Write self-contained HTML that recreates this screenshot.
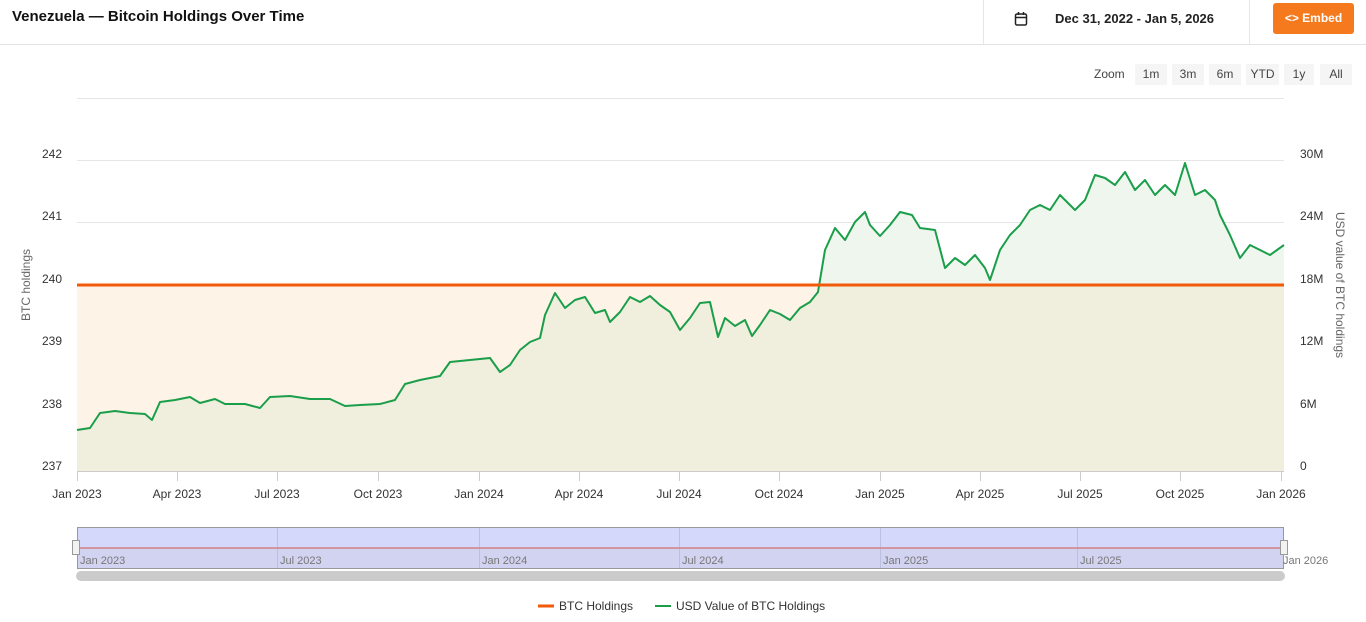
<!DOCTYPE html>
<html><head><meta charset="utf-8"><style>
body{margin:0;width:1366px;height:622px;background:#fff;font-family:"Liberation Sans",sans-serif;overflow:hidden;position:relative}
.hdr{position:absolute;left:0;top:0;width:1366px;height:44px;border-bottom:1px solid #e3e3e3}
.title{position:absolute;left:12px;top:8px;font-size:15px;font-weight:bold;color:#111}
.date{position:absolute;left:983px;top:0;width:265px;height:44px;border-left:1px solid #e6e6e6;border-right:1px solid #e6e6e6}
.date span{position:absolute;left:71px;top:11px;font-size:13px;font-weight:bold;color:#222}
.embed{position:absolute;left:1273px;top:3px;width:81px;height:31px;background:#f57a1e;border-radius:3px;color:#fff;font-size:12px;font-weight:bold;line-height:31px;text-align:center}
.zoom{position:absolute;top:64px;font-size:12px;color:#444;height:21px;line-height:21px;text-align:center;background:#f5f5f5}
</style></head><body>
<div class="hdr"><div class="title">Venezuela — Bitcoin Holdings Over Time</div>
<div class="date"><svg style="position:absolute;left:30px;top:11px" width="14" height="16" viewBox="0 0 14 16"><rect x="1.5" y="3" width="11" height="11" rx="1.5" fill="none" stroke="#222" stroke-width="1.5"/><line x1="1.5" y1="6.5" x2="12.5" y2="6.5" stroke="#222" stroke-width="1.5"/><line x1="4.5" y1="1" x2="4.5" y2="4" stroke="#222" stroke-width="1.5"/><line x1="9.5" y1="1" x2="9.5" y2="4" stroke="#222" stroke-width="1.5"/></svg><span>Dec 31, 2022 - Jan 5, 2026</span></div>
<div class="embed">&lt;&gt; Embed</div></div>
<div class="zoom" style="left:1094px;background:none">Zoom</div>
<div class="zoom" style="left:1135px;width:32px">1m</div>
<div class="zoom" style="left:1172px;width:32px">3m</div>
<div class="zoom" style="left:1209px;width:32px">6m</div>
<div class="zoom" style="left:1246px;width:33px">YTD</div>
<div class="zoom" style="left:1284px;width:30px">1y</div>
<div class="zoom" style="left:1320px;width:32px">All</div>
<svg style="position:absolute;left:0;top:0" width="1366" height="622" font-family="Liberation Sans" font-size="12" fill="#333">
<g stroke="#e6e6e6"><line x1="77" y1="98.5" x2="1284" y2="98.5"/><line x1="77" y1="160.5" x2="1284" y2="160.5"/><line x1="77" y1="222.5" x2="1284" y2="222.5"/><line x1="77" y1="347.5" x2="1284" y2="347.5"/><line x1="77" y1="409.5" x2="1284" y2="409.5"/></g>
<defs><clipPath id="ab"><rect x="77" y="285" width="1207" height="186"/></clipPath>
<polygon id="g" points="77,430 90,428 100,413 115,411 130,413 145,414 152,420 160,402 175,400 190,397 200,403 215,399 225,404 245,404 260,408 270,397 290,396 310,399 330,399 345,406 360,405 380,404 395,400 405,384 420,380 440,376 450,362 470,360 490,358 500,372 510,365 520,350 530,342 540,338 545,315 555,293 565,308 575,300 585,297 595,313 605,310 610,322 620,312 630,297 640,302 650,296 660,305 670,312 680,330 690,318 700,303 710,302 718,337 725,318 735,326 745,320 752,336 760,325 770,310 780,314 790,320 800,308 810,302 818,292 825,250 835,228 845,240 855,222 865,212 870,225 880,236 890,225 900,212 912,215 920,228 935,230 945,268 955,258 965,265 975,255 985,268 990,280 1000,250 1010,235 1020,225 1030,210 1040,205 1050,210 1060,195 1075,210 1085,200 1095,175 1105,178 1115,185 1125,172 1135,190 1145,180 1155,195 1165,185 1175,195 1185,163 1195,195 1205,190 1215,200 1220,215 1230,235 1240,258 1250,245 1260,250 1270,255 1284,245 1284,471 77,471"/></defs>
<rect x="77" y="285" width="1207" height="186" fill="#fdf3e6"/>
<use href="#g" fill="#eef6ee"/>
<use href="#g" fill="#f0efde" clip-path="url(#ab)"/>
<polyline fill="none" stroke="#1a9e4a" stroke-width="2" stroke-linejoin="round" points="77,430 90,428 100,413 115,411 130,413 145,414 152,420 160,402 175,400 190,397 200,403 215,399 225,404 245,404 260,408 270,397 290,396 310,399 330,399 345,406 360,405 380,404 395,400 405,384 420,380 440,376 450,362 470,360 490,358 500,372 510,365 520,350 530,342 540,338 545,315 555,293 565,308 575,300 585,297 595,313 605,310 610,322 620,312 630,297 640,302 650,296 660,305 670,312 680,330 690,318 700,303 710,302 718,337 725,318 735,326 745,320 752,336 760,325 770,310 780,314 790,320 800,308 810,302 818,292 825,250 835,228 845,240 855,222 865,212 870,225 880,236 890,225 900,212 912,215 920,228 935,230 945,268 955,258 965,265 975,255 985,268 990,280 1000,250 1010,235 1020,225 1030,210 1040,205 1050,210 1060,195 1075,210 1085,200 1095,175 1105,178 1115,185 1125,172 1135,190 1145,180 1155,195 1165,185 1175,195 1185,163 1195,195 1205,190 1215,200 1220,215 1230,235 1240,258 1250,245 1260,250 1270,255 1284,245"/>
<line x1="77" y1="285" x2="1284" y2="285" stroke="#f05a0a" stroke-width="3"/>
<line x1="77" y1="471.5" x2="1284" y2="471.5" stroke="#ccc"/>
<g stroke="#ccc"><line x1="77.5" y1="471" x2="77.5" y2="481"/><line x1="177.5" y1="471" x2="177.5" y2="481"/><line x1="277.5" y1="471" x2="277.5" y2="481"/><line x1="378.5" y1="471" x2="378.5" y2="481"/><line x1="479.5" y1="471" x2="479.5" y2="481"/><line x1="579.5" y1="471" x2="579.5" y2="481"/><line x1="679.5" y1="471" x2="679.5" y2="481"/><line x1="779.5" y1="471" x2="779.5" y2="481"/><line x1="880.5" y1="471" x2="880.5" y2="481"/><line x1="980.5" y1="471" x2="980.5" y2="481"/><line x1="1080.5" y1="471" x2="1080.5" y2="481"/><line x1="1180.5" y1="471" x2="1180.5" y2="481"/><line x1="1281.5" y1="471" x2="1281.5" y2="481"/></g>
<g text-anchor="middle"><text x="77" y="498">Jan 2023</text><text x="177" y="498">Apr 2023</text><text x="277" y="498">Jul 2023</text><text x="378" y="498">Oct 2023</text><text x="479" y="498">Jan 2024</text><text x="579" y="498">Apr 2024</text><text x="679" y="498">Jul 2024</text><text x="779" y="498">Oct 2024</text><text x="880" y="498">Jan 2025</text><text x="980" y="498">Apr 2025</text><text x="1080" y="498">Jul 2025</text><text x="1180" y="498">Oct 2025</text><text x="1281" y="498">Jan 2026</text></g>
<g text-anchor="end"><text x="62" y="158">242</text><text x="62" y="220">241</text><text x="62" y="283">240</text><text x="62" y="345">239</text><text x="62" y="408">238</text><text x="62" y="470">237</text></g>
<g><text x="1300" y="158">30M</text><text x="1300" y="220">24M</text><text x="1300" y="283">18M</text><text x="1300" y="345">12M</text><text x="1300" y="408">6M</text><text x="1300" y="470">0</text></g>
<text transform="translate(30,285) rotate(-90)" text-anchor="middle" fill="#666">BTC holdings</text>
<text transform="translate(1336,285) rotate(90)" text-anchor="middle" fill="#666">USD value of BTC holdings</text>
<rect x="77" y="527" width="1207" height="41" fill="#d2d3f0"/>
<rect x="77" y="527" width="1207" height="21" fill="#d4d8fb"/>
<rect x="77.5" y="527.5" width="1206" height="41" fill="none" stroke="#999"/>
<g stroke="#bcc0e0"><line x1="277.5" y1="528" x2="277.5" y2="568"/><line x1="479.5" y1="528" x2="479.5" y2="568"/><line x1="679.5" y1="528" x2="679.5" y2="568"/><line x1="880.5" y1="528" x2="880.5" y2="568"/><line x1="1077.5" y1="528" x2="1077.5" y2="568"/></g>
<line x1="77" y1="548" x2="1284" y2="548" stroke="#d08080" stroke-width="1.5"/>
<g font-size="11" fill="#777"><text x="80" y="564">Jan 2023</text><text x="280" y="564">Jul 2023</text><text x="482" y="564">Jan 2024</text><text x="682" y="564">Jul 2024</text><text x="883" y="564">Jan 2025</text><text x="1080" y="564">Jul 2025</text><text x="1283" y="564">Jan 2026</text></g>
<rect x="72.5" y="540.5" width="7" height="14" fill="#f2f2f2" stroke="#999"/><rect x="1280.5" y="540.5" width="7" height="14" fill="#f2f2f2" stroke="#999"/>
<rect x="76" y="571" width="1209" height="10" rx="5" fill="#cbcbcb"/>
<line x1="538" y1="606" x2="554" y2="606" stroke="#f05a0a" stroke-width="3"/>
<text x="559" y="610" fill="#333">BTC Holdings</text>
<line x1="655" y1="606" x2="671" y2="606" stroke="#1a9e4a" stroke-width="2"/>
<text x="676" y="610" fill="#333">USD Value of BTC Holdings</text>
</svg>
</body></html>
